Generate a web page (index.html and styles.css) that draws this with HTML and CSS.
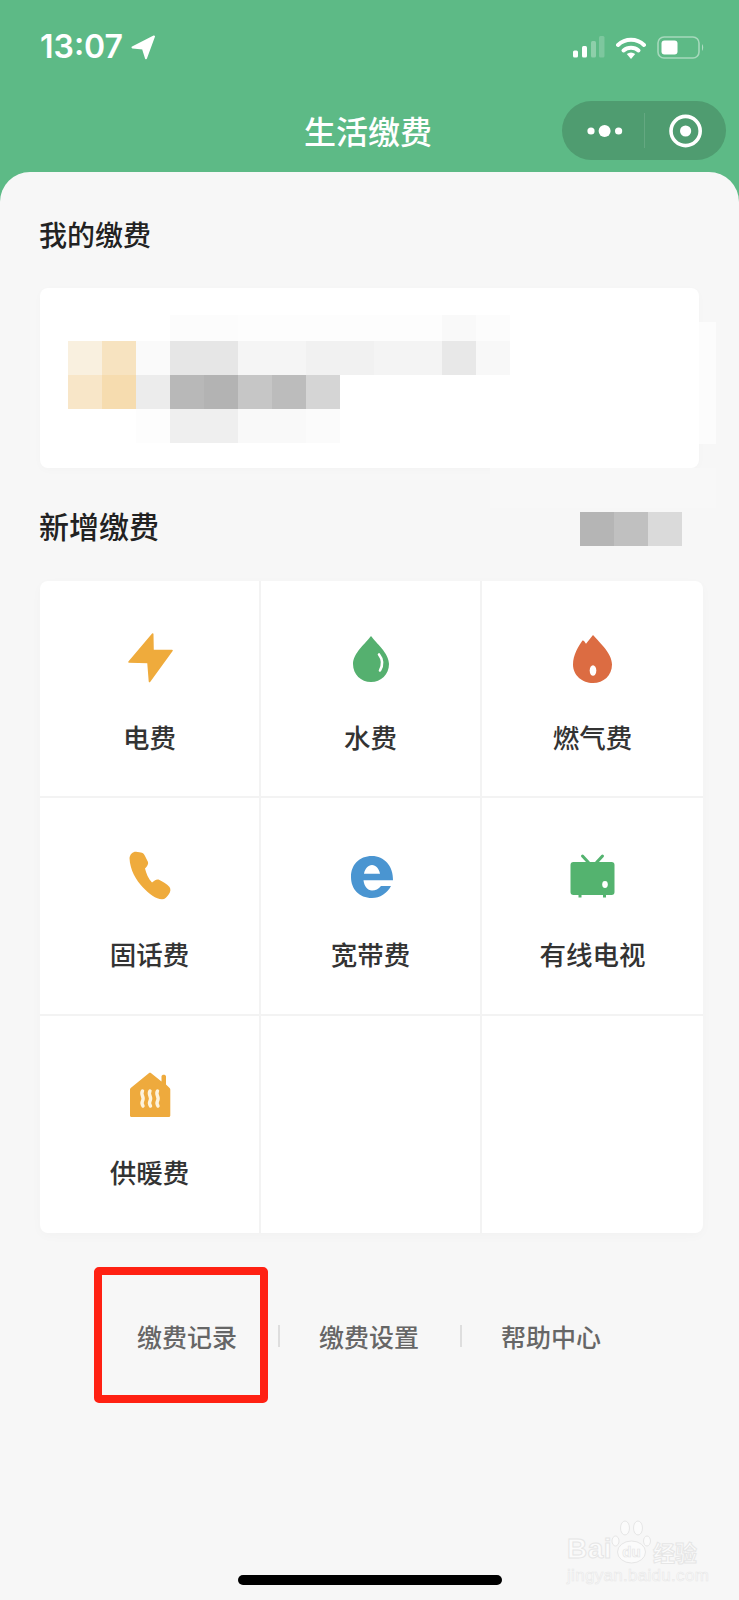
FILE: index.html
```html
<!DOCTYPE html>
<html lang="zh-CN">
<head>
    <meta charset="UTF-8">
    <meta name="viewport" content="width=device-width, initial-scale=1.0">
    <title>生活缴费</title>
    <link rel="stylesheet" href="styles.css">
</head>
<body>
    <header class="top">
        <div class="status-bar">
            <div class="status-left">
                <span class="time">13:07</span>
                <svg class="arrow" width="25" height="25" viewBox="0 0 25 25"><path d="M1.5 12.4 L23 1.5 L15 23.2 L12 13.6 Z" fill="#fff" stroke="#fff" stroke-width="2" stroke-linejoin="round"/></svg>
            </div>
            <div class="status-right">
                <svg width="32" height="22" viewBox="0 0 32 22">
                    <rect x="0" y="14.5" width="5" height="7" rx="1.5" fill="#fff"/>
                    <rect x="9" y="10" width="5" height="11.5" rx="1.5" fill="#fff"/>
                    <rect x="18" y="5" width="5" height="16.5" rx="1.5" fill="#fff" fill-opacity=".3"/>
                    <rect x="26" y="0" width="5.5" height="21.5" rx="1.5" fill="#fff" fill-opacity=".2"/>
                </svg>
                <svg width="30" height="23" viewBox="0 0 30 23">
                    <path d="M2 9 A19 19 0 0 1 28 9" fill="none" stroke="#fff" stroke-width="4" stroke-linecap="round"/>
                    <path d="M7.5 14.5 A11.5 11.5 0 0 1 22.5 14.5" fill="none" stroke="#fff" stroke-width="4" stroke-linecap="round"/>
                    <path d="M10.8 18 Q15 15 19.2 18 L15 23 Z" fill="#fff"/>
                </svg>
                <svg width="47" height="23" viewBox="0 0 47 23">
                    <rect x="1" y="1" width="41" height="21" rx="6" fill="none" stroke="#fff" stroke-opacity=".45" stroke-width="1.6"/>
                    <rect x="4.5" y="4.5" width="16" height="14" rx="3" fill="#fff"/>
                    <path d="M45 8 C46.6 9.5 46.6 13.5 45 15 Z" fill="#fff" fill-opacity=".5"/>
                </svg>
            </div>
        </div>
        <div class="nav-bar">
            <h1 class="nav-title">生活缴费</h1>
            <div class="capsule">
                <svg width="164" height="59" viewBox="0 0 164 59">
                    <circle cx="29" cy="30" r="3.6" fill="#fff"/>
                    <circle cx="42.6" cy="30" r="6" fill="#fff"/>
                    <circle cx="56.6" cy="30" r="3.6" fill="#fff"/>
                    <rect x="82" y="12" width="1" height="35" fill="#fff" fill-opacity=".12"/>
                    <circle cx="123.6" cy="30" r="14.6" fill="none" stroke="#fff" stroke-width="3.6"/>
                    <circle cx="123.6" cy="30" r="5.6" fill="#fff"/>
                </svg>
            </div>
        </div>
    </header>

    <main class="sheet">
        <h2 class="section-title">我的缴费</h2>
        <div class="bill-card">
            <svg class="mosaic" width="442" height="128" viewBox="0 0 442 128" shape-rendering="crispEdges">
                <g>
                    <rect x="102" y="0" width="68" height="26" fill="#fcfcfc"/>
                    <rect x="170" y="0" width="204" height="26" fill="#fdfdfd"/>
                    <rect x="374" y="0" width="34" height="26" fill="#f9f9f9"/>
                    <rect x="408" y="0" width="34" height="26" fill="#fcfcfc"/>
                </g>
                <g>
                    <rect x="0" y="26" width="34" height="34" fill="#f9f0df"/>
                    <rect x="34" y="26" width="34" height="34" fill="#f7e3c0"/>
                    <rect x="68" y="26" width="34" height="34" fill="#fafafa"/>
                    <rect x="102" y="26" width="68" height="34" fill="#e6e6e6"/>
                    <rect x="170" y="26" width="68" height="34" fill="#f5f5f5"/>
                    <rect x="238" y="26" width="68" height="34" fill="#f1f1f1"/>
                    <rect x="306" y="26" width="68" height="34" fill="#f4f4f4"/>
                    <rect x="374" y="26" width="34" height="34" fill="#e8e8e8"/>
                    <rect x="408" y="26" width="34" height="34" fill="#f8f8f8"/>
                </g>
                <g>
                    <rect x="0" y="60" width="34" height="34" fill="#f8e6c8"/>
                    <rect x="34" y="60" width="34" height="34" fill="#f6dcaf"/>
                    <rect x="68" y="60" width="34" height="34" fill="#ececec"/>
                    <rect x="102" y="60" width="34" height="34" fill="#b8b8b8"/>
                    <rect x="136" y="60" width="34" height="34" fill="#b3b3b3"/>
                    <rect x="170" y="60" width="34" height="34" fill="#c6c6c6"/>
                    <rect x="204" y="60" width="34" height="34" fill="#bcbcbc"/>
                    <rect x="238" y="60" width="34" height="34" fill="#d5d5d5"/>
                </g>
                <g>
                    <rect x="68" y="94" width="34" height="34" fill="#fdfdfd"/>
                    <rect x="102" y="94" width="68" height="34" fill="#efefef"/>
                    <rect x="170" y="94" width="68" height="34" fill="#f9f9f9"/>
                    <rect x="238" y="94" width="34" height="34" fill="#fbfbfb"/>
                </g>
            </svg>
        </div>

        <div class="section-row">
            <h2 class="section-title title-large">新增缴费</h2>
            <svg class="mosaic-small" width="102" height="34" viewBox="0 0 102 34" shape-rendering="crispEdges">
                <rect x="0" y="0" width="34" height="34" fill="#b5b5b5"/>
                <rect x="34" y="0" width="34" height="34" fill="#c0c0c0"/>
                <rect x="68" y="0" width="34" height="34" fill="#dadada"/>
            </svg>
        </div>

        <div class="pay-grid">
            <div class="pay-item">
                <svg class="pay-icon" width="56" height="56" viewBox="0 0 56 56"><path d="M30.7 3 L31 19.5 L50 19.5 L27.5 50.5 L26 31.5 L7 31 Z" fill="#efab3c" stroke="#efab3c" stroke-width="1.6" stroke-linejoin="round"/></svg>
                <span class="pay-label">电费</span>
            </div>
            <div class="pay-item">
                <svg class="pay-icon" width="56" height="56" viewBox="0 0 56 56">
                    <path d="M28 5 C33 12 46 22 46 33 C46 43.5 38 51 28 51 C18 51 10 43.5 10 33 C10 22 23 12 28 5 Z" fill="#55b06f"/>
                    <path d="M36 23.5 C39.5 28 40 34 37 39.5" fill="none" stroke="#fff" stroke-width="2.6" stroke-linecap="round"/>
                </svg>
                <span class="pay-label">水费</span>
            </div>
            <div class="pay-item">
                <svg class="pay-icon" width="56" height="56" viewBox="0 0 56 56">
                    <path d="M28 4 C34 11 47 22 47 33.5 C47 44.5 38.5 52 28 52 C17.5 52 8 44.5 8 33.5 C8 24 13.5 15 17.5 9.5 C18.5 9 20 11 21 12.8 Z" fill="#dc6c42"/>
                    <ellipse cx="28" cy="39.5" rx="3.3" ry="5.3" fill="#fff"/>
                </svg>
                <span class="pay-label">燃气费</span>
            </div>
            <div class="pay-item">
                <svg class="pay-icon" width="56" height="56" viewBox="0 0 56 56"><path d="M7.5 10 C8 6 11 3.5 14 3.7 L19 4.5 C21.5 5 22 6 23 8 L26 14 C26.5 16 25.5 18 23 20.5 C24 25 26.5 31 30 34.5 C32 33 34 31 36.5 31.5 C40 33 45 36 47.5 39 C49 41 48.5 44 47 46 C45 49 43 51.3 40 51.3 C34 51.3 27 46 21 39.5 C14 32 8 22 7.5 10 Z" fill="#efab3c"/></svg>
                <span class="pay-label">固话费</span>
            </div>
            <div class="pay-item">
                <svg class="pay-icon" width="56" height="56" viewBox="0 0 56 56"><path fill-rule="evenodd" d="M50 32.3 C50.5 18 41 8 29 8 C16 8 8 17 8 29 C8 41 16 50 29 50 C37 50 44 45.5 48 38 L38 38 C35.5 41 32.5 42.5 29 42.5 C24.5 42.5 21 38 20.5 32.3 Z M21 25.7 C22 20.5 25 17 29 17 C33 17 36 20.5 37 25.7 Z" fill="#4a95d1"/></svg>
                <span class="pay-label">宽带费</span>
            </div>
            <div class="pay-item">
                <svg class="pay-icon" width="56" height="56" viewBox="0 0 56 56">
                    <path d="M17.5 8 L23.5 14.5 M37.5 8 L31.5 14.5" fill="none" stroke="#54b36f" stroke-width="3" stroke-linecap="round"/>
                    <rect x="5.5" y="14" width="44" height="33" rx="3" fill="#54b36f"/>
                    <rect x="13.5" y="46" width="3" height="3.5" fill="#54b36f"/>
                    <rect x="38" y="46" width="3" height="3.5" fill="#54b36f"/>
                    <ellipse cx="40" cy="36.5" rx="2.8" ry="3.4" fill="#fff"/>
                </svg>
                <span class="pay-label">有线电视</span>
            </div>
            <div class="pay-item">
                <svg class="pay-icon" width="56" height="56" viewBox="0 0 56 56">
                    <path d="M26.8 7.2 C27.5 6.6 28.5 6.6 29.2 7.2 L39.5 15.5 L39.5 10.5 C39.5 8.2 44 8.2 44 10.5 L44 18.5 L47.6 22 C48 22.4 48.3 23 48.3 23.6 L48.3 49.5 C48.3 50.4 47.7 51 46.8 51 L9.5 51 C8.6 51 8 50.4 8 49.5 L8 23.6 C8 23 8.3 22.4 8.7 22 Z" fill="#eeaa3d"/>
                    <path d="M20.5 25 C18 29 23 31 20.5 35 C19.5 37 20 38.5 21 40 M28 25 C25.5 29 30.5 31 28 35 C27 37 27.5 38.5 28.5 40 M35.5 25 C33 29 38 31 35.5 35 C34.5 37 35 38.5 36 40" fill="none" stroke="#fdf3dc" stroke-width="3.4" stroke-linecap="round"/>
                </svg>
                <span class="pay-label">供暖费</span>
            </div>
            <div class="pay-item"></div>
            <div class="pay-item"></div>
        </div>

        <div class="footer-links">
            <span class="footer-link">缴费记录</span>
            <i class="footer-sep"></i>
            <span class="footer-link">缴费设置</span>
            <i class="footer-sep"></i>
            <span class="footer-link">帮助中心</span>
            <div class="red-box"></div>
        </div>
    </main>

    <!-- retouched patches left in the screenshot -->
    <div class="smudge smudge-side"></div>
    <div class="smudge smudge-under"></div>

    <div class="watermark">
        <div class="wm-top">
            <span class="wm-bai">Bai</span>
            <svg class="wm-paw" width="42" height="44" viewBox="0 0 42 44">
                <g fill="#fbfbfb" stroke="#e6e6e6" stroke-width="1">
                    <ellipse cx="4.5" cy="21" rx="3.5" ry="5"/>
                    <ellipse cx="14" cy="8" rx="4.5" ry="7"/>
                    <ellipse cx="27" cy="8" rx="4.5" ry="7"/>
                    <ellipse cx="36" cy="21" rx="3.5" ry="5"/>
                    <ellipse cx="20.5" cy="32" rx="14" ry="11"/>
                </g>
                <text x="20.5" y="37" text-anchor="middle" class="wm-du">du</text>
            </svg>
            <span class="wm-cn">经验</span>
        </div>
        <div class="wm-url">jingyan.baidu.com</div>
    </div>

    <div class="home-bar"></div>
</body>
</html>
```

FILE: styles.css
```css
* {
    box-sizing: border-box;
}

html, body {
    margin: 0;
    padding: 0;
}

body {
    position: relative;
    width: 739px;
    height: 1600px;
    overflow: hidden;
    background: #5dba86;
    font-family: "Noto Sans CJK SC", "Noto Sans", sans-serif;
    color: #222;
}

.top {
    height: 172px;
}

.status-bar {
    display: flex;
    justify-content: space-between;
    align-items: center;
    height: 94px;
    padding: 0 35px 0 40px;
}

.status-left {
    display: flex;
    align-items: center;
    gap: 8px;
}

.time {
    font-family: Inter, Roboto, sans-serif;
    font-size: 32px;
    font-weight: 600;
    color: #fff;
    line-height: 36px;
}

.status-right {
    display: flex;
    align-items: center;
    gap: 11px;
}

.status-right svg,
.status-left svg {
    display: block;
}

.nav-bar {
    display: grid;
    grid-template-columns: 1fr auto 1fr;
    align-items: center;
    height: 59px;
    margin-top: 7px;
    padding-right: 13px;
}

.nav-title {
    grid-column: 2;
    margin: 0;
    font-size: 32px;
    font-weight: 500;
    color: #fff;
    line-height: 59px;
    position: relative;
    left: 5px;
}

.capsule {
    justify-self: end;
    width: 164px;
    height: 59px;
    border-radius: 30px;
    background: #4f9c70;
}

.capsule svg {
    display: block;
}

.sheet {
    height: 1428px;
    padding: 42px 36px 0 40px;
    background: #f7f7f7;
    border-radius: 30px 30px 0 0;
}

.section-title {
    margin: 0 0 0 -1px;
    font-size: 28px;
    font-weight: 500;
    line-height: 40px;
    color: #222;
}

.title-large {
    font-size: 30px;
}

.bill-card {
    height: 180px;
    margin: 34px 4px 0 0;
    padding: 27px 0 0 28px;
    background: #fff;
    border-radius: 8px;
    box-shadow: 0 2px 10px rgba(0, 0, 0, 0.02);
}

.mosaic {
    display: block;
}

.section-row {
    display: flex;
    justify-content: space-between;
    align-items: flex-start;
    margin-top: 37px;
    padding-right: 21px;
}

.mosaic-small {
    display: block;
    margin-top: 7px;
}

.pay-grid {
    display: grid;
    grid-template-columns: repeat(3, 1fr);
    grid-template-rows: 217px 218px 217px;
    height: 652px;
    margin-top: 35px;
    background: #fff;
    border-radius: 8px;
    overflow: hidden;
    box-shadow: 0 3px 12px rgba(0, 0, 0, 0.025);
}

.pay-item {
    display: flex;
    flex-direction: column;
    align-items: center;
    padding-top: 50px;
    border-right: 2px solid #f3f3f3;
    border-bottom: 2px solid #f3f3f3;
}

.pay-item:nth-child(3n) {
    border-right: none;
}

.pay-item:nth-child(n+7) {
    border-bottom: none;
}

.pay-icon {
    display: block;
}

.pay-label {
    margin-top: 34px;
    font-size: 26.5px;
    font-weight: 500;
    line-height: 32px;
    color: #333;
}

.footer-links {
    position: relative;
    display: flex;
    align-items: center;
    gap: 40px;
    height: 30px;
    margin-top: 88px;
    padding-left: 97px;
}

.footer-link {
    font-size: 25px;
    font-weight: 500;
    line-height: 30px;
    color: #666;
}

.footer-sep {
    width: 2px;
    height: 22px;
    margin: 0 -1px 0 1px;
    background: #dedede;
}

.red-box {
    position: absolute;
    left: 54px;
    top: -54px;
    width: 174px;
    height: 136px;
    border: 8px solid #ff2113;
    border-radius: 5px;
}

.smudge {
    position: absolute;
    background: #fcfcfc;
}

.smudge-side {
    left: 699px;
    top: 322px;
    width: 17px;
    height: 122px;
}

.smudge-under {
    left: 490px;
    top: 468px;
    width: 226px;
    height: 40px;
    background: #f8f8f8;
}

.home-bar {
    position: absolute;
    left: 238px;
    top: 1575px;
    width: 264px;
    height: 10px;
    border-radius: 5px;
    background: #000;
}

.watermark {
    position: absolute;
    left: 567px;
    top: 1520px;
    width: 134px;
}

.wm-top {
    display: flex;
    align-items: flex-end;
    height: 44px;
}

.wm-bai,
.wm-cn,
.wm-url {
    font-family: "Liberation Sans", sans-serif;
    color: #fbfbfb;
    -webkit-text-stroke: 1px #e6e6e6;
}

.wm-bai {
    width: 46px;
    font-size: 28px;
    font-weight: 700;
    line-height: 30px;
    letter-spacing: 0.5px;
}

.wm-paw {
    display: block;
    flex: none;
    margin-left: -2px;
}

.wm-du {
    font-family: "Liberation Sans", sans-serif;
    font-size: 15px;
    font-weight: 700;
    fill: #fbfbfb;
    stroke: #e6e6e6;
    stroke-width: 0.7;
}

.wm-cn {
    font-family: "Noto Sans CJK SC", sans-serif;
    font-size: 22px;
    font-weight: 700;
    line-height: 26px;
}

.wm-url {
    margin-top: 3px;
    font-size: 17px;
    line-height: 18px;
    letter-spacing: 0.3px;
    white-space: nowrap;
    -webkit-text-stroke: 0.6px #e8e8e8;
}
```
